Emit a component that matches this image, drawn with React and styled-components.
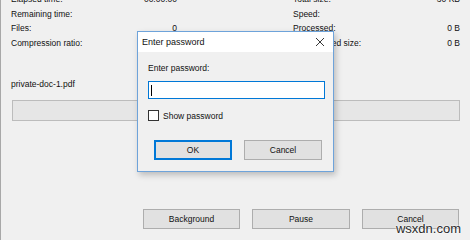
import React from "react";
import styled, { createGlobalStyle } from "styled-components";

const GlobalStyle = createGlobalStyle`
  html, body {
    margin: 0;
    padding: 0;
    background: #f0f0f0;
  }
  body {
    font-family: "Liberation Sans", Arial, sans-serif;
    color: #111;
  }
`;

const Window = styled.div`
  position: relative;
  width: 470px;
  height: 240px;
  overflow: hidden;
  box-sizing: border-box;
  background: #f0f0f0;
  border-left: 1px solid #a8a8a8;
  display: flex;
  flex-direction: column;
  font-size: 8.5px;
`;

const Stats = styled.div`
  display: grid;
  grid-template-columns: 166px 167px;
  column-gap: 116px;
  margin: -8px 0 0 10px;
`;

const Stat = styled.div`
  display: flex;
  justify-content: space-between;
  height: 14.5px;
  line-height: 14.5px;
  white-space: nowrap;
`;

const FileName = styled.div`
  margin: 27px 0 0 10px;
  line-height: 14px;
`;

const Progress = styled.div`
  margin: 9px 10px 0 11px;
  height: 21px;
  box-sizing: border-box;
  border: 1px solid #bcbcbc;
  background: #e6e6e6;
`;

const ButtonRow = styled.div`
  display: flex;
  justify-content: ${(p) => p.$justify || "flex-end"};
  gap: 12px;
  margin-top: ${(p) => p.$top || 0}px;
  padding-right: ${(p) => p.$right || 0}px;
  padding-left: ${(p) => p.$left || 0}px;
`;

const Button = styled.div`
  width: ${(p) => p.$w || 97}px;
  height: 20px;
  box-sizing: border-box;
  background: #e1e1e1;
  border: 1px solid ${(p) => (p.$focus ? "#0078d7" : "#adadad")};
  box-shadow: ${(p) => (p.$focus ? "inset 0 0 0 1px #0078d7" : "none")};
  display: flex;
  align-items: center;
  justify-content: center;
  font-size: 8.5px;
  color: #111;
`;

const Dialog = styled.div`
  position: absolute;
  left: 136px;
  top: 31px;
  width: 197px;
  box-sizing: border-box;
  border: 1px solid #6ea3da;
  background: #f0f0f0;
  box-shadow: 2px 3px 6px rgba(0, 0, 0, 0.22);
`;

const TitleBar = styled.div`
  height: 20px;
  background: #fff;
  display: flex;
  align-items: center;
  justify-content: space-between;
  padding: 0 8px 0 4px;
  font-size: 9px;
`;

const DialogBody = styled.div`
  display: flex;
  flex-direction: column;
  padding: 10px 8px 11px 10px;
`;

const Label = styled.div`
  line-height: 12px;
  font-size: 8.5px;
`;

const PasswordBox = styled.div`
  margin-top: 7px;
  height: 18px;
  box-sizing: border-box;
  background: #fff;
  border: 1px solid #0078d7;
  display: flex;
  align-items: center;
  padding-left: 2px;
`;

const Caret = styled.span`
  width: 1px;
  height: 11px;
  background: #000;
`;

const CheckRow = styled.div`
  margin-top: 11px;
  display: flex;
  align-items: center;
  gap: 4px;
  font-size: 8.5px;
`;

const Box = styled.span`
  width: 11px;
  height: 11px;
  box-sizing: border-box;
  border: 1px solid #333;
  background: #fff;
`;

const Watermark = styled.div`
  position: absolute;
  right: 9px;
  bottom: 4px;
  font-size: 13px;
  color: #2a2a2a;
  text-shadow: 0 0 2px #fff, 0 0 2px #fff;
`;

const left = [
  ["Elapsed time:", "00:00:00"],
  ["Remaining time:", ""],
  ["Files:", "0"],
  ["Compression ratio:", ""],
];

const right = [
  ["Total size:", "30 KB"],
  ["Speed:", ""],
  ["Processed:", "0 B"],
  ["Compressed size:", "0 B"],
];

const CloseIcon = () => (
  <svg width="10" height="10" viewBox="0 0 10 10">
    <path d="M1 1L9 9M9 1L1 9" stroke="#222" strokeWidth="0.9" fill="none" />
  </svg>
);

export default function App() {
  return (
    <>
      <GlobalStyle />
      <Window>
        <Stats>
          {left.map((row, i) => (
            <React.Fragment key={i}>
              <Stat>
                <span>{row[0]}</span>
                <span>{row[1]}</span>
              </Stat>
              <Stat>
                <span>{right[i][0]}</span>
                <span>{right[i][1]}</span>
              </Stat>
            </React.Fragment>
          ))}
        </Stats>
        <FileName>private-doc-1.pdf</FileName>
        <Progress />
        <ButtonRow $top={88} $right={11}>
          <Button>Background</Button>
          <Button $w={98}>Pause</Button>
          <Button>Cancel</Button>
        </ButtonRow>

        <Dialog>
          <TitleBar>
            <span>Enter password</span>
            <CloseIcon />
          </TitleBar>
          <DialogBody>
            <Label>Enter password:</Label>
            <PasswordBox>
              <Caret />
            </PasswordBox>
            <CheckRow>
              <Box />
              <span>Show password</span>
            </CheckRow>
            <ButtonRow $top={19} $left={6} $right={2} $justify="flex-start">
              <Button $w={78} $focus>OK</Button>
              <Button $w={78}>Cancel</Button>
            </ButtonRow>
          </DialogBody>
        </Dialog>
        <Watermark>wsxdn.com</Watermark>
      </Window>
    </>
  );
}
